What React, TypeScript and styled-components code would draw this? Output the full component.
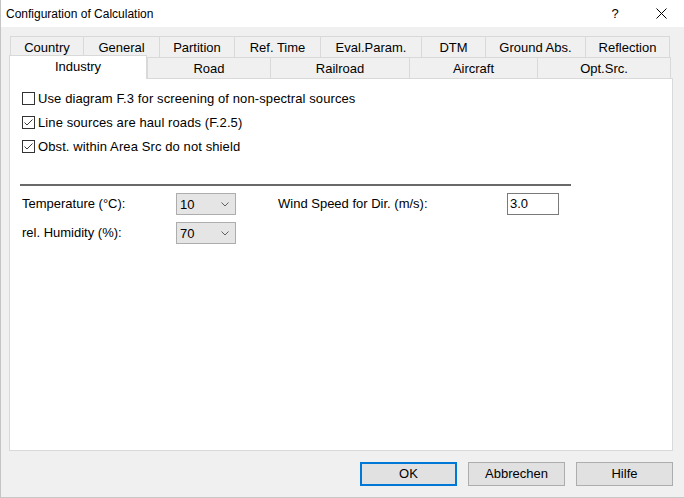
import React from "react";
import styled, { createGlobalStyle } from "styled-components";

const GlobalStyle = createGlobalStyle`
  * { box-sizing: border-box; }
  html, body { margin: 0; padding: 0; background: #ffffff; }
  body {
    font-family: "Liberation Sans", Arial, sans-serif;
    font-size: 13px;
    color: #000;
  }
`;

const Window = styled.div`
  width: 684px;
  height: 498px;
  background: #f0f0f0;
  border-left: 1px solid #c4c4c4;
  border-bottom: 1px solid #c8c8c8;
  display: flex;
  flex-direction: column;
  overflow: hidden;
`;

const TitleBar = styled.div`
  height: 27px;
  background: #ffffff;
  display: flex;
  align-items: center;
  padding-left: 5px;
  font-size: 12px;
`;

const Title = styled.div`
  flex: 1;
`;

const TitleButton = styled.div`
  width: 46px;
  height: 27px;
  display: flex;
  align-items: center;
  justify-content: center;
  font-size: 13px;
`;

const Body = styled.div`
  flex: 1;
  display: flex;
  flex-direction: column;
  padding: 9px 11px 0 8px;
`;

const TabRow = styled.div<{ $indent: number }>`
  display: flex;
  height: 21px;
  padding-left: ${(p) => p.$indent}px;
`;

const Tab = styled.div<{ $w: number; $active?: boolean }>`
  width: ${(p) => p.$w}px;
  height: ${(p) => (p.$active ? 24 : 21)}px;
  margin-top: ${(p) => (p.$active ? -2 : 0)}px;
  display: flex;
  align-items: center;
  justify-content: center;
  padding-bottom: ${(p) => (p.$active ? 3 : 0)}px;
  background: ${(p) => (p.$active ? "#ffffff" : "#f0f0f0")};
  border-top: 1px solid #d9d9d9;
  border-left: 1px solid #d9d9d9;
  border-right: ${(p) => (p.$active ? "1px solid #d9d9d9" : "none")};
  position: relative;
  z-index: ${(p) => (p.$active ? 1 : 0)};
  white-space: nowrap;
  &:last-child {
    border-right: 1px solid #d9d9d9;
  }
`;

const Panel = styled.div`
  width: 664px;
  height: 373px;
  background: #ffffff;
  border: 1px solid #d9d9d9;
  padding: 7px 12px 0 12px;
  display: flex;
  flex-direction: column;
`;

const CheckRow = styled.label`
  height: 24px;
  display: flex;
  align-items: center;
  gap: 3px;
  letter-spacing: 0.1px;
`;

const Box = styled.span`
  width: 13px;
  height: 13px;
  border: 1px solid #333333;
  background: #ffffff;
  display: flex;
  align-items: center;
  justify-content: center;
`;

const Separator = styled.div`
  height: 2px;
  width: 551px;
  margin: 26px 0 7px -2px;
  background: #696969;
`;

const FormGrid = styled.div`
  display: grid;
  grid-template-columns: 154px 60px 42px 229px 52px;
  grid-auto-rows: 22px;
  row-gap: 7px;
  align-items: center;
`;

const FieldLabel = styled.div<{ $col?: number }>`
  grid-column: ${(p) => p.$col ?? 1};
  padding-bottom: 1px;
`;

const Select = styled.div`
  grid-column: 2;
  height: 22px;
  background: #e5e5e5;
  border: 1px solid #adadad;
  display: flex;
  align-items: center;
  justify-content: space-between;
  padding: 0 6px 0 3px;
`;

const TextInput = styled.div`
  grid-column: 5;
  height: 22px;
  background: #ffffff;
  border: 1px solid #7a7a7a;
  display: flex;
  align-items: center;
  padding-left: 2px;
  padding-bottom: 1px;
`;

const Footer = styled.div`
  display: flex;
  justify-content: flex-end;
  gap: 11px;
  margin-top: 11px;
`;

const Button = styled.div<{ $default?: boolean }>`
  width: 97px;
  height: 24px;
  background: #e1e1e1;
  border: ${(p) => (p.$default ? "2px solid #0078d7" : "1px solid #adadad")};
  display: flex;
  align-items: center;
  justify-content: center;
  padding-bottom: 1px;
`;

const backRow = [
  { label: "Country", w: 73 },
  { label: "General", w: 76 },
  { label: "Partition", w: 75 },
  { label: "Ref. Time", w: 86 },
  { label: "Eval.Param.", w: 101 },
  { label: "DTM", w: 64 },
  { label: "Ground Abs.", w: 100 },
  { label: "Reflection", w: 85 },
];

const frontRow = [
  { label: "Industry", w: 138, active: true },
  { label: "Road", w: 123 },
  { label: "Railroad", w: 139 },
  { label: "Aircraft", w: 128 },
  { label: "Opt.Src.", w: 134 },
];

const options = [
  { label: "Use diagram F.3 for screening of non-spectral sources", checked: false },
  { label: "Line sources are haul roads (F.2.5)", checked: true },
  { label: "Obst. within Area Src do not shield", checked: true },
];

const CheckMark = () => (
  <svg width="11" height="11" viewBox="0 0 11 11">
    <path d="M1.5 5.5 L4 8 L9.5 2.5" fill="none" stroke="#3c3c3c" strokeWidth="1" />
  </svg>
);

const Chevron = () => (
  <svg width="8" height="5" viewBox="0 0 8 5">
    <path d="M0.5 0.5 L4 4 L7.5 0.5" fill="none" stroke="#606060" strokeWidth="1" />
  </svg>
);

const CloseIcon = () => (
  <svg width="11" height="11" viewBox="0 0 11 11">
    <path d="M0.5 0.5 L10.5 10.5 M10.5 0.5 L0.5 10.5" stroke="#000" strokeWidth="1" />
  </svg>
);

export default function App() {
  return (
    <>
      <GlobalStyle />
      <Window>
        <TitleBar>
          <Title>Configuration of Calculation</Title>
          <TitleButton>?</TitleButton>
          <TitleButton>
            <CloseIcon />
          </TitleButton>
        </TitleBar>
        <Body>
          <TabRow $indent={1}>
            {backRow.map((t) => (
              <Tab key={t.label} $w={t.w}>
                {t.label}
              </Tab>
            ))}
          </TabRow>
          <TabRow $indent={0}>
            {frontRow.map((t) => (
              <Tab key={t.label} $w={t.w} $active={t.active}>
                {t.label}
              </Tab>
            ))}
          </TabRow>
          <Panel>
            {options.map((o) => (
              <CheckRow key={o.label}>
                <Box>{o.checked && <CheckMark />}</Box>
                {o.label}
              </CheckRow>
            ))}
            <Separator />
            <FormGrid>
              <FieldLabel>Temperature (°C):</FieldLabel>
              <Select>
                <span>10</span>
                <Chevron />
              </Select>
              <FieldLabel $col={4}>Wind Speed for Dir. (m/s):</FieldLabel>
              <TextInput>3.0</TextInput>
              <FieldLabel>rel. Humidity (%):</FieldLabel>
              <Select>
                <span>70</span>
                <Chevron />
              </Select>
            </FormGrid>
          </Panel>
          <Footer>
            <Button $default>OK</Button>
            <Button>Abbrechen</Button>
            <Button>Hilfe</Button>
          </Footer>
        </Body>
      </Window>
    </>
  );
}
